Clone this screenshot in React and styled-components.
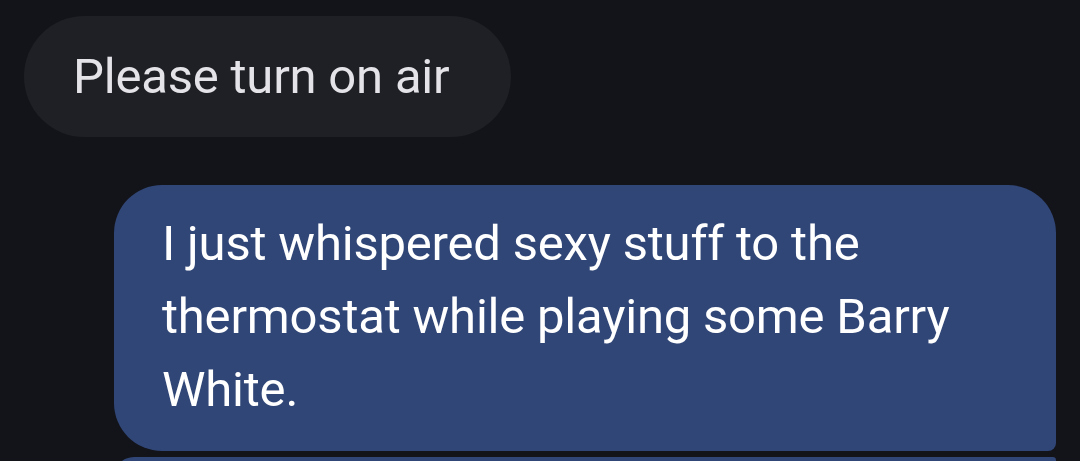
import React from "react";
import styled, { createGlobalStyle } from "styled-components";

const Global = createGlobalStyle`
  html, body {
    margin: 0;
    padding: 0;
    background: #131419;
    overflow: hidden;
  }
  body {
    font-family: Roboto, "Noto Sans", "Liberation Sans", sans-serif;
  }
`;

const Thread = styled.div`
  display: flex;
  flex-direction: column;
  width: 1080px;
  height: 461px;
  overflow: hidden;
  padding-top: 16px;
  box-sizing: border-box;
`;

const Row = styled.div`
  display: flex;
  justify-content: ${(p) => (p.$out ? "flex-end" : "flex-start")};
  padding: ${(p) => (p.$out ? "0 24px 0 0" : "0 0 0 24px")};
  margin-top: ${(p) => p.$gap || 0}px;
`;

const IncomingBubble = styled.div`
  display: flex;
  align-items: center;
  height: 121px;
  padding: 0 61px 0 49px;
  box-sizing: border-box;
  border-radius: 61px;
  background: #1f2025;
  color: #e3e3e8;
  font-size: 49px;
  line-height: 73px;
  letter-spacing: -0.2px;
`;

const OutgoingBubble = styled.div`
  width: 942px;
  box-sizing: border-box;
  padding: ${(p) => (p.$stub ? "0" : "22px 40px 25px 48px")};
  height: ${(p) => (p.$stub ? "40px" : "auto")};
  background: #304677;
  color: #ffffff;
  font-size: 49px;
  line-height: 73px;
  letter-spacing: -0.2px;
  border-radius: ${(p) => (p.$stub ? "48px 8px 48px 48px" : "48px 48px 8px 48px")};
`;

export default function App() {
  return (
    <>
      <Global />
      <Thread>
        <Row>
          <IncomingBubble>Please turn on air</IncomingBubble>
        </Row>
        <Row $out $gap={48}>
          <OutgoingBubble>
            I just whispered sexy stuff to the thermostat while playing some Barry White.
          </OutgoingBubble>
        </Row>
        <Row $out $gap={6}>
          <OutgoingBubble $stub />
        </Row>
      </Thread>
    </>
  );
}
